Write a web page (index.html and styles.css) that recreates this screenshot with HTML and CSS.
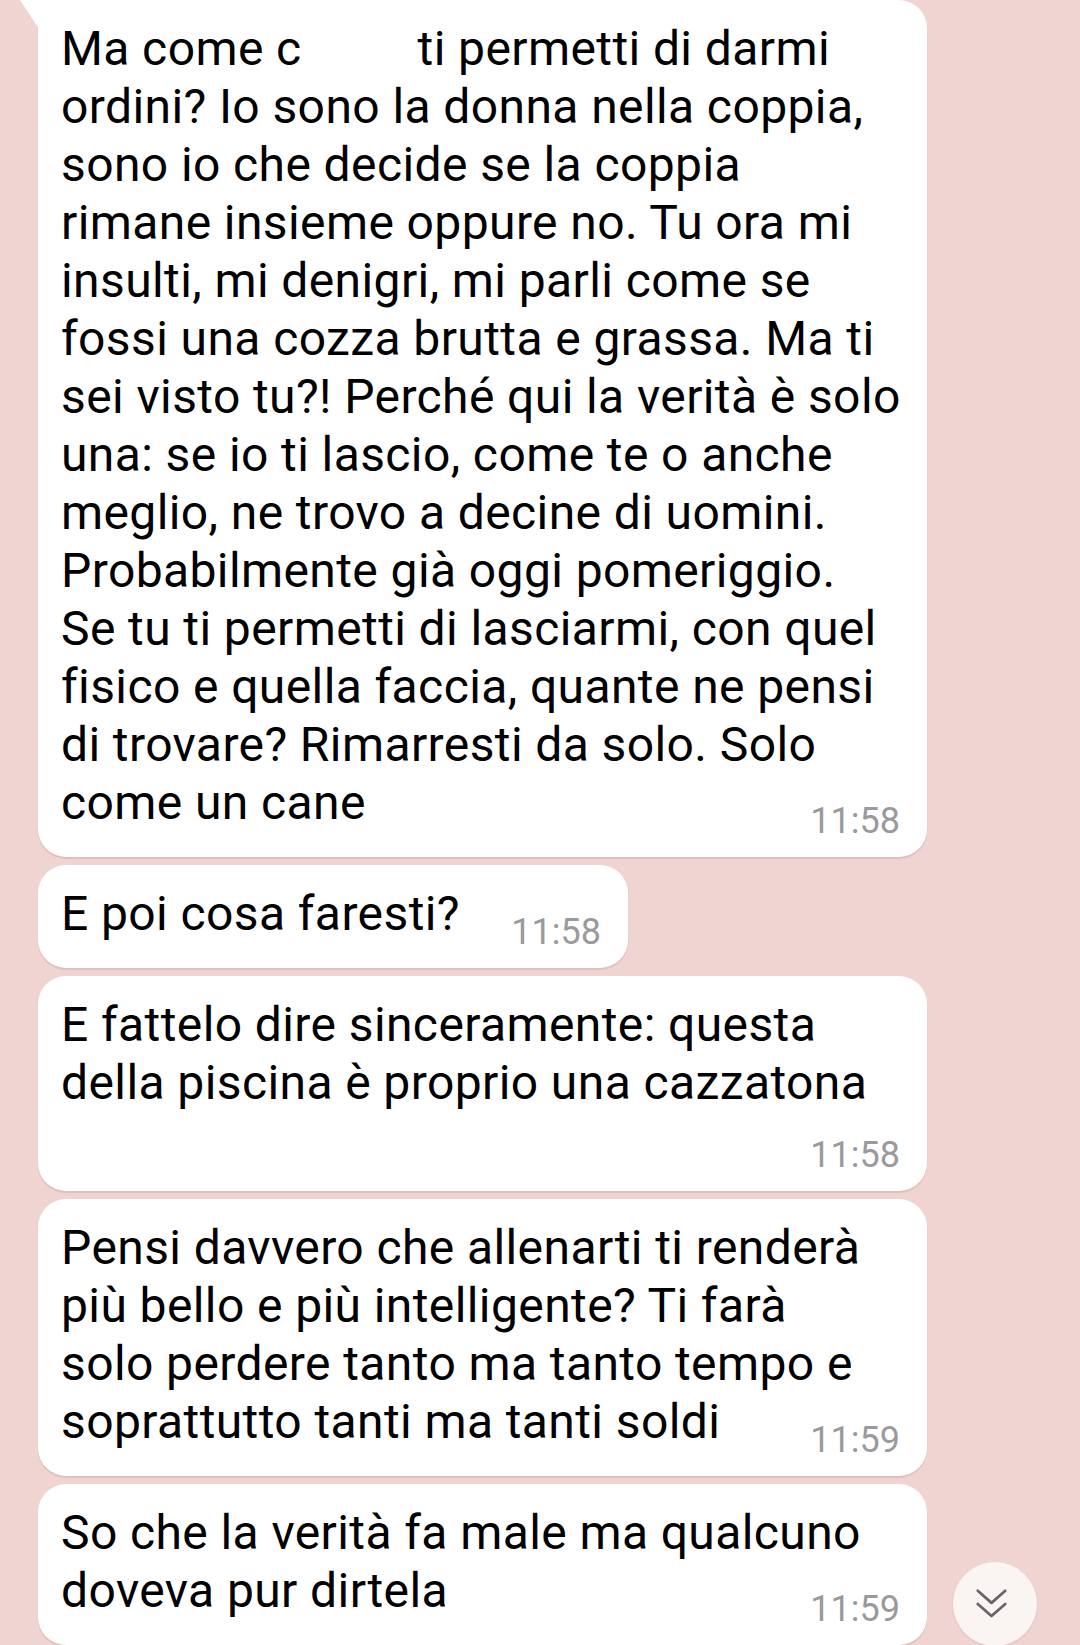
FILE: index.html
```html
<!DOCTYPE html>
<html lang="it">
<head>
    <meta charset="UTF-8">
    <meta name="viewport" content="width=device-width, initial-scale=1.0">
    <title>Chat</title>
    <link rel="stylesheet" href="styles.css">
</head>
<body>
    <div class="chat">
        <div class="bubble first">
            <div class="text">Ma come c<span class="blank"></span>ti permetti di darmi<br>ordini? Io sono la donna nella coppia,<br>sono io che decide se la coppia<br>rimane insieme oppure no. Tu ora mi<br>insulti, mi denigri, mi parli come se<br>fossi una cozza brutta e grassa. Ma ti<br>sei visto tu?! Perché qui la verità è solo<br>una: se io ti lascio, come te o anche<br>meglio, ne trovo a decine di uomini.<br>Probabilmente già oggi pomeriggio.<br>Se tu ti permetti di lasciarmi, con quel<br>fisico e quella faccia, quante ne pensi<br>di trovare? Rimarresti da solo. Solo<br>come un cane</div>
            <div class="time">11:58</div>
        </div>
        <div class="bubble narrow">
            <div class="text">E poi cosa faresti?</div>
            <div class="time">11:58</div>
        </div>
        <div class="bubble">
            <div class="text">E fattelo dire sinceramente: questa<br>della piscina è proprio una cazzatona</div>
            <div class="time own-line">11:58</div>
        </div>
        <div class="bubble">
            <div class="text">Pensi davvero che allenarti ti renderà<br>più bello e più intelligente? Ti farà<br>solo perdere tanto ma tanto tempo e<br>soprattutto tanti ma tanti soldi</div>
            <div class="time">11:59</div>
        </div>
        <div class="bubble">
            <div class="text">So che la verità fa male ma qualcuno<br>doveva pur dirtela</div>
            <div class="time">11:59</div>
        </div>
    </div>

    <button class="scroll-down" aria-label="Scorri in basso">
        <svg width="33" height="33" viewBox="0 0 30 30" fill="none" stroke="#666" stroke-width="2.5" stroke-linecap="round" stroke-linejoin="round">
            <polyline points="2.5,2.5 15,13.5 27.5,2.5"/>
            <polyline points="2.5,14.5 15,25.5 27.5,14.5"/>
        </svg>
    </button>
</body>
</html>
```

FILE: styles.css
```css
:root {
    --bg: #f0d4d1;
    --bubble: #fff;
    --time: #9a9a9c;
}
* {
    box-sizing: border-box;
    margin: 0;
    padding: 0;
}
html, body {
    height: 1645px;
    overflow: hidden;
}
body {
    font-family: Roboto, 'Noto Sans', 'Liberation Sans', sans-serif;
    background: var(--bg);
    color: #000;
}
.chat {
    display: flex;
    flex-direction: column;
    align-items: flex-start;
    gap: 8px;
    padding-left: 38px;
}
.bubble {
    position: relative;
    width: 889px;
    background: var(--bubble);
    border-radius: 28px;
    padding: 20px 27px 15px 23px;
    box-shadow: 0 1.5px 1px rgba(150, 100, 100, 0.18);
}
.bubble.first {
    border-top-left-radius: 0;
}
/* codina del primo messaggio */
.bubble.first::before {
    content: '';
    position: absolute;
    left: -18px;
    top: 0;
    width: 19px;
    height: 29px;
    background: var(--bubble);
    clip-path: polygon(0 0, 100% 0, 100% 100%);
}
.bubble.narrow {
    width: 590px;
}
.text {
    font-size: 48px;
    line-height: 58px;
    letter-spacing: 0.4px;
    white-space: nowrap;
}
.blank {
    display: inline-block;
    width: 116px;
}
.time {
    font-size: 36px;
    line-height: 42px;
    color: var(--time);
    text-align: right;
    margin-top: -32px;
}
.time.own-line {
    margin-top: 22px;
}
.scroll-down {
    position: fixed;
    left: 953px;
    top: 1562px;
    width: 84px;
    height: 84px;
    border: none;
    border-radius: 50%;
    background: #faf4f3;
    display: flex;
    align-items: center;
    justify-content: center;
    padding-right: 8px;
    box-shadow: 0 1px 2px rgba(120, 80, 80, 0.15);
}
```
